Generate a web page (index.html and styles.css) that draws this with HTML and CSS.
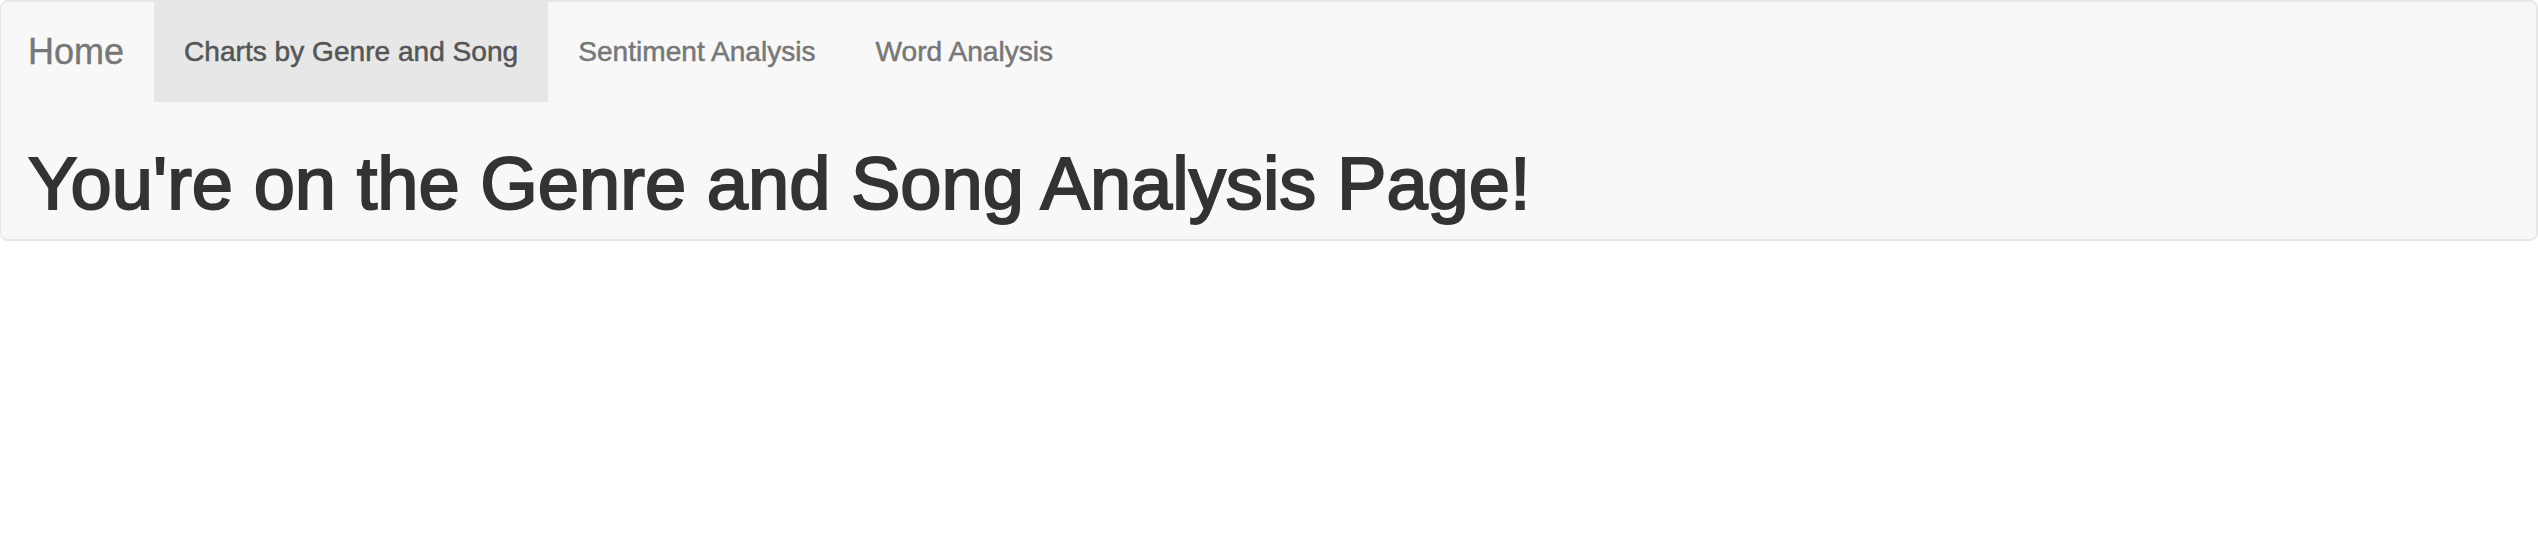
FILE: index.html
```html
<!DOCTYPE html>
<html lang="en">
<head>
<meta charset="utf-8">
<title>Genre and Song Analysis</title>
<link rel="stylesheet" href="styles.css">
</head>
<body>
<div class="navbar">
  <div class="nav-row">
    <a class="brand" href="#">Home</a>
    <ul class="nav">
      <li class="nav-item active"><a href="#">Charts by Genre and Song</a></li>
      <li class="nav-item"><a href="#">Sentiment Analysis</a></li>
      <li class="nav-item"><a href="#">Word Analysis</a></li>
    </ul>
  </div>
  <h1 class="page-title">You're on the Genre and Song Analysis Page!</h1>
</div>
</body>
</html>
```
FILE: styles.css
```css
html, body {
  margin: 0;
  padding: 0;
  background: #ffffff;
}

body {
  font-family: "Liberation Sans", Arial, Helvetica, sans-serif;
  -webkit-font-smoothing: antialiased;
}

.navbar {
  background: #f8f8f8;
  border: 2px solid #e7e7e7;
  border-left-width: 1px;
  border-radius: 8px;
  box-sizing: border-box;
  width: 2538px;
}

.nav-row {
  display: flex;
  align-items: stretch;
  height: 100px;
}

.brand {
  display: block;
  padding: 30px 30px 30px 27px;
  font-size: 36px;
  line-height: 40px;
  color: #777777;
  text-decoration: none;
  -webkit-text-stroke: 0.4px #777777;
}

.nav {
  display: flex;
  list-style: none;
  margin: 0;
  padding: 0;
}

.nav-item a {
  display: block;
  padding: 30px;
  font-size: 28.1px;
  line-height: 40px;
  color: #777777;
  text-decoration: none;
  -webkit-text-stroke: 0.5px #777777;
}

.nav-item.active a {
  background: #e7e7e7;
  color: #555555;
  -webkit-text-stroke: 0.5px #555555;
}

.page-title {
  margin: 0;
  padding: 41px 0 15px 27px;
  font-size: 74.1px;
  line-height: 81px;
  font-weight: 400;
  color: #333333;
  -webkit-text-stroke: 2px #333333;
}
```
